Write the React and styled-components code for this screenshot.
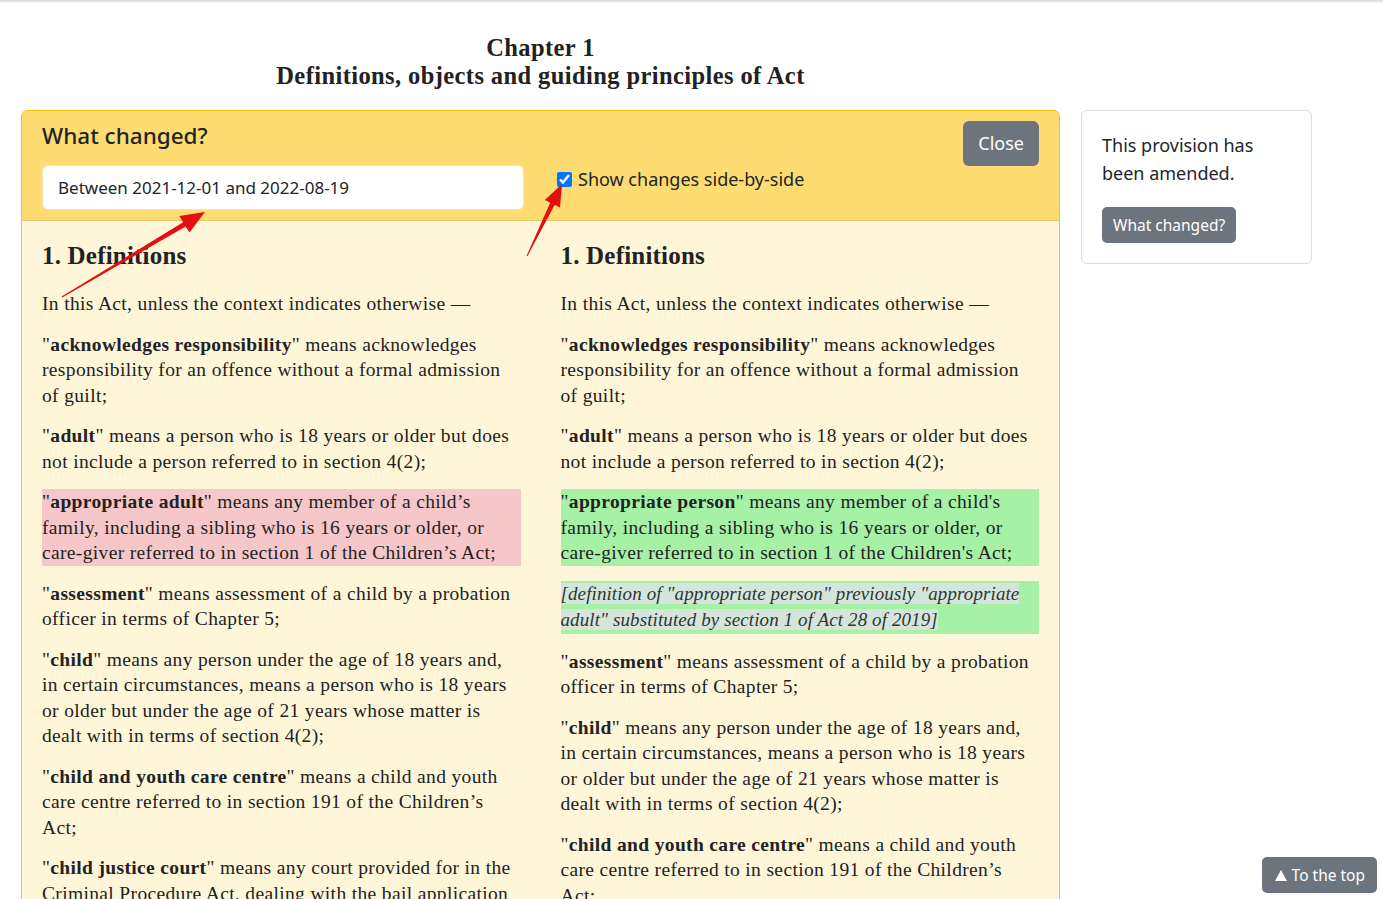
import React from "react";
import styled, { createGlobalStyle } from "styled-components";

const Global = createGlobalStyle`
  body {
    margin: 0;
    font-family: "Noto Sans", "Open Sans", sans-serif;
    font-size: 18px;
    color: #212529;
    background: #fff;
  }
`;

const TopEdge = styled.div`
  height: 3px;
  background: linear-gradient(#d6d6d6, #fff);
`;

const Page = styled.div`
  position: relative;
  display: grid;
  grid-template-columns: 1039px 231px;
  column-gap: 21px;
  align-items: start;
  padding: 0 21px;
`;

const Main = styled.div`
  display: flex;
  flex-direction: column;
`;

const ChapterTitle = styled.h2`
  margin: 31px 0 20px;
  text-align: center;
  font-family: "Liberation Serif", serif;
  font-weight: 700;
  font-size: 24.5px;
  letter-spacing: 0.4px;
  line-height: 28px;
  color: #222;
`;

const Card = styled.div`
  border: 1px solid #ffc107;
  border-radius: 6px;
  background: rgba(255, 193, 7, 0.15);
  overflow: hidden;
`;

const CardHeader = styled.div`
  display: grid;
  grid-template-columns: 1fr 1fr;
  column-gap: 33px;
  padding: 10px 20px 10px;
  background: rgba(255, 193, 7, 0.5);
  border-bottom: 1px solid #e7c96b;
`;

const HeaderTitle = styled.h5`
  margin: 1px 0 16px;
  font-size: 22.5px;
  font-weight: 500;
  line-height: 27px;
`;

const DateInput = styled.div`
  height: 45px;
  box-sizing: border-box;
  display: flex;
  align-items: center;
  padding: 0 15px;
  background: #fff;
  border: 1px solid #f0e3bb;
  border-radius: 6px;
  font-size: 17px;
`;

const HeaderRight = styled.div`
  display: flex;
  justify-content: space-between;
  align-items: flex-start;
`;

const CheckLabel = styled.label`
  display: flex;
  align-items: center;
  gap: 6px;
  margin-top: 45px;
  font-size: 18px;
  line-height: 27px;
`;

const Check = styled.input`
  width: 15px;
  height: 15px;
  margin: 0;
  accent-color: #0075ff;
`;

const GreyButton = styled.button`
  display: inline-flex;
  align-items: center;
  gap: 6px;
  border: none;
  border-radius: ${(p) => (p.$small ? "5px" : "6px")};
  background: #6c757d;
  color: #fff;
  font-family: inherit;
  font-size: ${(p) => (p.$small ? "15.5px" : "18px")};
  line-height: ${(p) => (p.$small ? "24px" : "27px")};
  padding: ${(p) => (p.$small ? "6px 11px" : "9px 15px")};
  cursor: pointer;
`;

const CardBody = styled.div`
  display: grid;
  grid-template-columns: 1fr 1fr;
  column-gap: 40px;
  padding: 20px 20px 0;
  font-family: "Liberation Serif", serif;
  font-size: 19.5px;
  letter-spacing: 0.35px;
  line-height: 25.5px;
  color: #222;
`;

const Column = styled.div`
  display: flex;
  flex-direction: column;
  gap: 15px;
`;

const SectionTitle = styled.h3`
  margin: 1px 0 6px;
  font-size: 25px;
  letter-spacing: 0.2px;
  line-height: 28px;
  font-weight: 700;
`;

const Para = styled.p`
  margin: 0;
  background: ${(p) =>
    p.$mark === "del" ? "#f6c7c8" : p.$mark === "ins" ? "#a6f1a6" : "transparent"};
`;

const Note = styled.span`
  font-style: italic;
  font-size: 19px;
  letter-spacing: 0.1px;
  line-height: 26.5px;
  background: #d4e6dc;
  color: #333;
`;

const Side = styled.div`
  margin-top: 107px;
  border: 1px solid #dcdcdc;
  border-radius: 6px;
  padding: 20px;
`;

const SideText = styled.p`
  margin: 0 0 20px;
  line-height: 28px;
`;

const TopButton = styled(GreyButton)`
  position: fixed;
  right: 6px;
  bottom: 6px;
  gap: 5px;
  padding: 6px 12px 6px 13px;
`;

const Arrows = styled.svg`
  position: absolute;
  left: 0;
  top: 0;
  pointer-events: none;
  overflow: visible;
`;

const Term = ({ t }) => (
  <>
    "<b>{t}</b>"
  </>
);

const Common = () => (
  <>
    <SectionTitle>1. Definitions</SectionTitle>
    <Para>In this Act, unless the context indicates otherwise —</Para>
    <Para>
      <Term t="acknowledges responsibility" /> means acknowledges responsibility for an
      offence without a formal admission of guilt;
    </Para>
    <Para>
      <Term t="adult" /> means a person who is 18 years or older but does not include a
      person referred to in section 4(2);
    </Para>
  </>
);

const Rest = () => (
  <>
    <Para>
      <Term t="assessment" /> means assessment of a child by a probation officer in terms
      of Chapter 5;
    </Para>
    <Para>
      <Term t="child" /> means any person under the age of 18 years and, in certain
      circumstances, means a person who is 18 years or older but under the age of 21
      years whose matter is dealt with in terms of section 4(2);
    </Para>
    <Para>
      <Term t="child and youth care centre" /> means a child and youth care centre
      referred to in section 191 of the Children’s Act;
    </Para>
    <Para>
      <Term t="child justice court" /> means any court provided for in the Criminal
      Procedure Act, dealing with the bail application of a child;
    </Para>
  </>
);

export default function App() {
  return (
    <>
      <Global />
      <TopEdge />
      <Page>
        <Main>
          <ChapterTitle>
            Chapter 1
            <br />
            Definitions, objects and guiding principles of Act
          </ChapterTitle>
          <Card>
            <CardHeader>
              <div>
                <HeaderTitle>What changed?</HeaderTitle>
                <DateInput>Between 2021-12-01 and 2022-08-19</DateInput>
              </div>
              <HeaderRight>
                <CheckLabel>
                  <Check type="checkbox" checked readOnly />
                  Show changes side-by-side
                </CheckLabel>
                <GreyButton>Close</GreyButton>
              </HeaderRight>
            </CardHeader>
            <CardBody>
              <Column>
                <Common />
                <Para $mark="del">
                  <Term t="appropriate adult" /> means any member of a child’s family,
                  including a sibling who is 16 years or older, or care-giver referred to
                  in section 1 of the Children’s Act;
                </Para>
                <Rest />
              </Column>
              <Column>
                <Common />
                <Para $mark="ins">
                  <Term t="appropriate person" /> means any member of a child's family,
                  including a sibling who is 16 years or older, or care-giver referred to
                  in section 1 of the Children's Act;
                </Para>
                <Para $mark="ins">
                  <Note>
                    [definition of "appropriate person" previously "appropriate adult"
                    substituted by section 1 of Act 28 of 2019]
                  </Note>
                </Para>
                <Rest />
              </Column>
            </CardBody>
          </Card>
        </Main>
        <Side>
          <SideText>This provision has been amended.</SideText>
          <GreyButton $small>What changed?</GreyButton>
        </Side>
        <Arrows width="1" height="1">
          <polygon
            points="62.3,294.4 185.7,223.5 189.5,229.5 205,209 179.3,213.1 183.1,219.2 61.7,293.6"
            fill="#e3100f"
          />
          <polygon
            points="527.4,253.2 554.6,201.9 560,204.5 562,181 544.8,197.1 550.2,199.7 526.6,252.8"
            fill="#e3100f"
          />
        </Arrows>
      </Page>
      <TopButton $small>
        <svg width="12" height="11" viewBox="0 0 12 11">
          <polygon points="6,0 12,11 0,11" fill="#fff" />
        </svg>
        To the top
      </TopButton>
    </>
  );
}
